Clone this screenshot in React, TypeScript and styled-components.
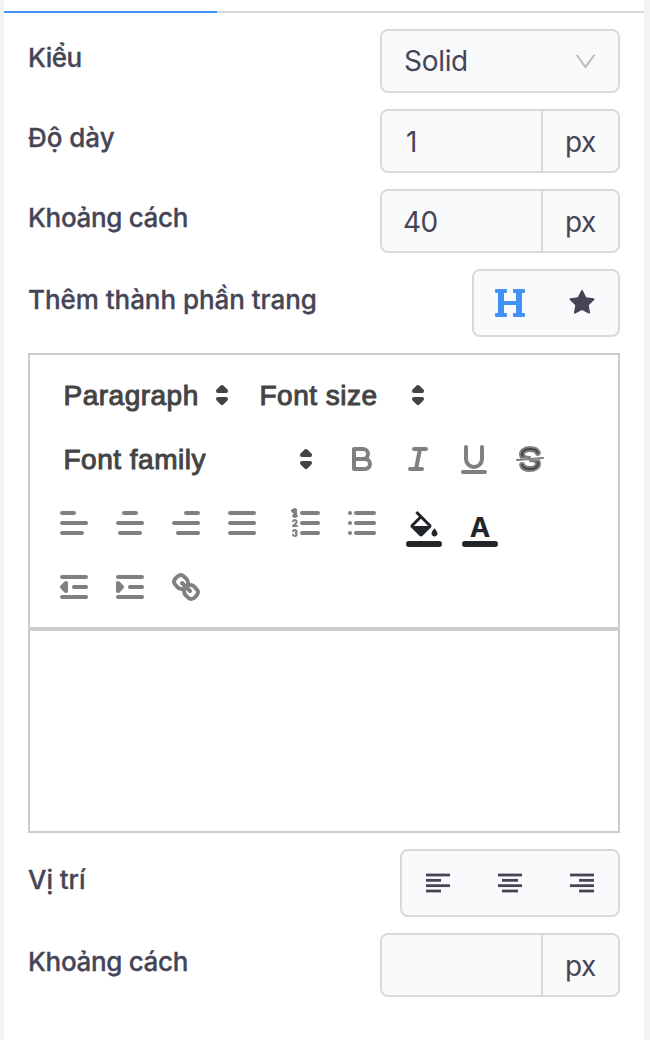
import React from "react";
import styled, { createGlobalStyle } from "styled-components";
import { AiFillStar, AiOutlineDown } from "react-icons/ai";
import { FaHeading } from "react-icons/fa";

const ink = "#454556";
const border = "#d9d9d9";
const field = "#f9fafc";
const gray = "#808080";

const GlobalStyle = createGlobalStyle`
  * { box-sizing: border-box; }
  body { margin: 0; background: #f2f3f5; font-family: Inter, "Liberation Sans", sans-serif; color: ${ink}; }
`;

const Panel = styled.main`
  width: 640px;
  height: 1040px;
  margin-left: 4px;
  padding-top: 11px;
  background: #fff;
  overflow: hidden;
`;

const TabLine = styled.div`
  height: 2px;
  background: ${border};
`;

const ActiveTab = styled.div`
  width: 213px;
  height: 2px;
  background: #4191f7;
`;

const Form = styled.div`
  display: flex;
  flex-direction: column;
  gap: 16px;
  padding: 16px 24px;
`;

const Row = styled.div`
  display: flex;
  align-items: center;
  justify-content: space-between;
`;

const Label = styled.label<{ $spacing?: number }>`
  padding-bottom: 6px;
  font-size: 26px;
  font-weight: 500;
  line-height: 32px;
  letter-spacing: ${(p) => p.$spacing ?? -0.04}px;
  -webkit-text-stroke: 0.3px ${ink};
  white-space: nowrap;
`;

const Box = styled.div`
  display: flex;
  align-items: center;
  border: 2px solid ${border};
  border-radius: 8px;
  background: ${field};
  font-size: 28px;
  line-height: 34px;
  overflow: hidden;
`;

const Select = styled(Box)`
  width: 240px;
  height: 64px;
  justify-content: space-between;
  padding: 0 19px 0 22px;
  letter-spacing: -0.3px;
  svg { color: #bfbfbf; }
`;

const NumberBox = styled(Box)`
  width: 240px;
  height: 64px;
`;

const Value = styled.div<{ $indent?: number }>`
  flex: 1;
  padding: 2px 0 0 ${(p) => p.$indent ?? 21}px;
  letter-spacing: -0.5px;
`;

const Unit = styled.div`
  display: flex;
  align-items: center;
  justify-content: center;
  width: 77px;
  height: 60px;
  padding-top: 2px;
  border-left: 2px solid ${border};
  background: #fafafa;
  letter-spacing: -0.5px;
`;

const Toggle = styled(Box)`
  height: 68px;
`;

const ToggleItem = styled.div<{ $active?: boolean }>`
  display: flex;
  align-items: center;
  justify-content: center;
  width: 72px;
  height: 64px;
  color: ${(p) => (p.$active ? "#4191f7" : ink)};
`;

const Editor = styled.section`
  height: 480px;
  border: 2px solid #ccc;
`;

const Toolbar = styled.div`
  display: flex;
  flex-direction: column;
  gap: 16px;
  padding: 16px;
  border-bottom: 4px solid #ccc;
`;

const ToolRow = styled.div`
  display: flex;
  gap: 8px;
  height: 48px;
`;

const Group = styled.div`
  display: flex;
`;

const Picker = styled.div<{ $width: number }>`
  display: flex;
  align-items: center;
  justify-content: space-between;
  width: ${(p) => p.$width}px;
  padding: 0 2px 0 17.5px;
  color: #444;
  font-family: "Liberation Sans", Arial, sans-serif;
  font-size: 28px;
  font-weight: 500;
  letter-spacing: 0.5px;
  -webkit-text-stroke: 1px #444;
  white-space: nowrap;
`;

const PickerText = styled.span`
  padding-top: 2px;
`;

const Tool = styled.div`
  width: 56px;
  height: 48px;
  padding: 6px 10px;
`;

const ColorTool = styled.div`
  display: flex;
  flex-direction: column;
  justify-content: flex-end;
  align-items: center;
  width: 56px;
  height: 48px;
  padding: 0 12px 0 8px;
  color: #212529;
`;

const ColorBar = styled.div`
  width: 36px;
  height: 6px;
  border-radius: 3px;
  background: #212529;
`;

const Letter = styled.span`
  height: 30px;
  font-size: 27.5px;
  font-weight: 700;
  line-height: 32px;
`;

const Glyph = styled.svg`
  display: block;
  width: 36px;
  height: 36px;
  fill: none;
  stroke: ${gray};
  stroke-width: 2;
  stroke-linecap: round;
  stroke-linejoin: round;
  .thin { stroke-width: 1; }
  .fill { fill: #444; stroke-width: 1; }
`;

const ArrowGlyph = styled(Glyph)`
  stroke: #444;
  fill: #444;
`;

const Icon = ({ children }: { children: React.ReactNode }) => (
  <Tool>
    <Glyph viewBox="0 0 18 18">{children}</Glyph>
  </Tool>
);

const FormatPicker = ({ text, width }: { text: string; width: number }) => (
  <Picker $width={width}>
    <PickerText>{text}</PickerText>
    <ArrowGlyph viewBox="0 0 18 18">
      <polygon points="7 11 9 13 11 11 7 11" />
      <polygon points="7 7 9 5 11 7 7 7" />
    </ArrowGlyph>
  </Picker>
);

const Lines = ({ spans }: { spans: [number, number][] }) => (
  <>
    {spans.map(([a, b], i) => (
      <line key={i} x1={a} x2={b} y1={4 + i * 5} y2={4 + i * 5} />
    ))}
  </>
);

const positions: Record<string, [number, number]> = {
  left: [0, 15],
  center: [4, 16],
  right: [9, 15],
};

const PositionIcon = ({ side }: { side: string }) => {
  const [x, w] = positions[side];
  return (
    <svg width="24" height="20" viewBox="0 0 24 20" fill="currentColor">
      <rect y="0.6" width="24" height="2.8" />
      <rect x={x} y="5.95" width={w} height="2.8" />
      <rect y="11.25" width="24" height="2.8" />
      <rect x={x} y="16.6" width={w} height="2.8" />
    </svg>
  );
};

const NumberRow = ({
  label,
  value,
  indent,
  spacing,
}: {
  label: string;
  value: string;
  indent?: number;
  spacing?: number;
}) => (
  <Row>
    <Label $spacing={spacing}>{label}</Label>
    <NumberBox>
      <Value $indent={indent}>{value}</Value>
      <Unit>px</Unit>
    </NumberBox>
  </Row>
);

export default function App() {
  return (
    <>
      <GlobalStyle />
      <Panel>
        <TabLine>
          <ActiveTab />
        </TabLine>
        <Form>
          <Row>
            <Label $spacing={-0.5}>Kiểu</Label>
            <Select>
              Solid
              <AiOutlineDown size={27} />
            </Select>
          </Row>
          <NumberRow label="Độ dày" value="1" indent={24} />
          <NumberRow label="Khoảng cách" value="40" spacing={-0.32} />
          <Row>
            <Label>Thêm thành phần trang</Label>
            <Toggle>
              <ToggleItem $active>
                <FaHeading size={32} />
              </ToggleItem>
              <ToggleItem>
                <AiFillStar size={30} />
              </ToggleItem>
            </Toggle>
          </Row>

          <Editor>
            <Toolbar>
              <ToolRow>
                <Group>
                  <FormatPicker width={196} text="Paragraph" />
                  <FormatPicker width={196} text="Font size" />
                </Group>
              </ToolRow>
              <ToolRow>
                <FormatPicker width={280} text="Font family" />
                <Group>
                  <Icon>
                    <path d="M5,4H9.5A2.5,2.5,0,0,1,12,6.5v0A2.5,2.5,0,0,1,9.5,9H5V4Z" />
                    <path d="M5,9h5.5A2.5,2.5,0,0,1,13,11.5v0A2.5,2.5,0,0,1,10.5,14H5V9Z" />
                  </Icon>
                  <Icon>
                    <line x1="7" x2="13" y1="4" y2="4" />
                    <line x1="5" x2="11" y1="14" y2="14" />
                    <line x1="8" x2="10" y1="14" y2="4" />
                  </Icon>
                  <Icon>
                    <path d="M5,3V9a4.012,4.012,0,0,0,4,4H9a4.012,4.012,0,0,0,4-4V3" />
                    <rect className="thin" fill={gray} height="1" rx="0.5" width="12" x="3" y="15" />
                  </Icon>
                  <Icon>
                    <line className="thin" x1="15.5" x2="2.5" y1="8.5" y2="9.5" />
                    <path className="fill" d="M9.007,8C6.542,7.791,6,7.519,6,6.5,6,5.792,7.283,5,9,5c1.571,0,2.765.679,2.969,1.309a1,1,0,0,0,1.9-.617C13.356,4.106,11.354,3,9,3,6.2,3,4,4.538,4,6.5a3.2,3.2,0,0,0,.5,1.843Z" />
                    <path className="fill" d="M8.984,10C11.457,10.208,12,10.479,12,11.5c0,0.708-1.283,1.5-3,1.5-1.571,0-2.765-.679-2.969-1.309a1,1,0,1,0-1.9.617C4.644,13.894,6.646,15,9,15c2.8,0,5-1.538,5-3.5a3.2,3.2,0,0,0-.5-1.843Z" />
                  </Icon>
                </Group>
              </ToolRow>
              <ToolRow>
                <Group>
                  <Icon><Lines spans={[[3, 9], [3, 15], [3, 13]]} /></Icon>
                  <Icon><Lines spans={[[6, 12], [3, 15], [4, 14]]} /></Icon>
                  <Icon><Lines spans={[[9, 15], [3, 15], [5, 15]]} /></Icon>
                  <Icon><Lines spans={[[3, 15], [3, 15], [3, 15]]} /></Icon>
                </Group>
                <Group>
                  <Icon>
                    <Lines spans={[[7, 15], [7, 15], [7, 15]]} />
                    <line className="thin" x1="2.5" x2="4.5" y1="5.5" y2="5.5" />
                    <path className="thin" fill={gray} d="M3.5,6A0.5,0.5,0,0,1,3,5.5V3.085l-0.276.138A0.5,0.5,0,0,1,2.053,3c-0.124-.247-0.023-0.324.224-0.447l1-.5A0.5,0.5,0,0,1,4,2.5v3A0.5,0.5,0,0,1,3.5,6Z" />
                    <path className="thin" d="M4.5,10.5h-2c0-.234,1.85-1.076,1.85-2.234A0.959,0.959,0,0,0,2.5,8.156" />
                    <path className="thin" d="M2.5,14.846a0.959,0.959,0,0,0,1.85-.109A0.7,0.7,0,0,0,3.75,14a0.688,0.688,0,0,0,.6-0.736,0.959,0.959,0,0,0-1.85-.109" />
                  </Icon>
                  <Icon>
                    <Lines spans={[[6, 15], [6, 15], [6, 15]]} />
                    <Lines spans={[[3, 3], [3, 3], [3, 3]]} />
                  </Icon>
                </Group>
                <Group>
                  <ColorTool>
                    <svg width="36" height="30" viewBox="0 0 24 20" fill="currentColor">
                      <path d="M16.56 8.94L7.62 0 6.21 1.41l2.38 2.38-5.15 5.15c-.59.59-.59 1.54 0 2.12l5.5 5.5c.29.29.68.44 1.06.44s.77-.15 1.06-.44l5.5-5.5c.59-.58.59-1.53 0-2.12zM5.21 10L10 5.21 14.79 10H5.21zM19 11.5s-2 2.17-2 3.5c0 1.1.9 2 2 2s2-.9 2-2c0-1.33-2-3.5-2-3.5z" />
                    </svg>
                    <ColorBar />
                  </ColorTool>
                  <ColorTool>
                    <Letter>A</Letter>
                    <ColorBar />
                  </ColorTool>
                </Group>
              </ToolRow>
              <ToolRow>
                <Group>
                  <Icon>
                    <line x1="3" x2="15" y1="14" y2="14" />
                    <line x1="3" x2="15" y1="4" y2="4" />
                    <line x1="9" x2="15" y1="9" y2="9" />
                    <polygon fill={gray} points="5 7 5 11 3 9 5 7" />
                  </Icon>
                  <Icon>
                    <line x1="3" x2="15" y1="14" y2="14" />
                    <line x1="3" x2="15" y1="4" y2="4" />
                    <line x1="9" x2="15" y1="9" y2="9" />
                    <polygon fill={gray} points="3 7 3 11 5 9 3 7" />
                  </Icon>
                  <Icon>
                    <line x1="7" x2="11" y1="7" y2="11" />
                    <path d="M8.9,4.577a3.476,3.476,0,0,1,.36,4.679A3.476,3.476,0,0,1,4.577,8.9C3.185,7.5,2.035,6.4,4.217,4.217S7.5,3.185,8.9,4.577Z" />
                    <path d="M13.423,9.1a3.476,3.476,0,0,0-4.679-.36,3.476,3.476,0,0,0,.36,4.679c1.392,1.392,2.5,2.542,4.679.36S14.815,10.5,13.423,9.1Z" />
                  </Icon>
                </Group>
              </ToolRow>
            </Toolbar>
          </Editor>

          <Row>
            <Label>Vị trí</Label>
            <Toggle>
              <ToggleItem><PositionIcon side="left" /></ToggleItem>
              <ToggleItem><PositionIcon side="center" /></ToggleItem>
              <ToggleItem><PositionIcon side="right" /></ToggleItem>
            </Toggle>
          </Row>
          <NumberRow label="Khoảng cách" value="" spacing={-0.32} />
        </Form>
      </Panel>
    </>
  );
}
